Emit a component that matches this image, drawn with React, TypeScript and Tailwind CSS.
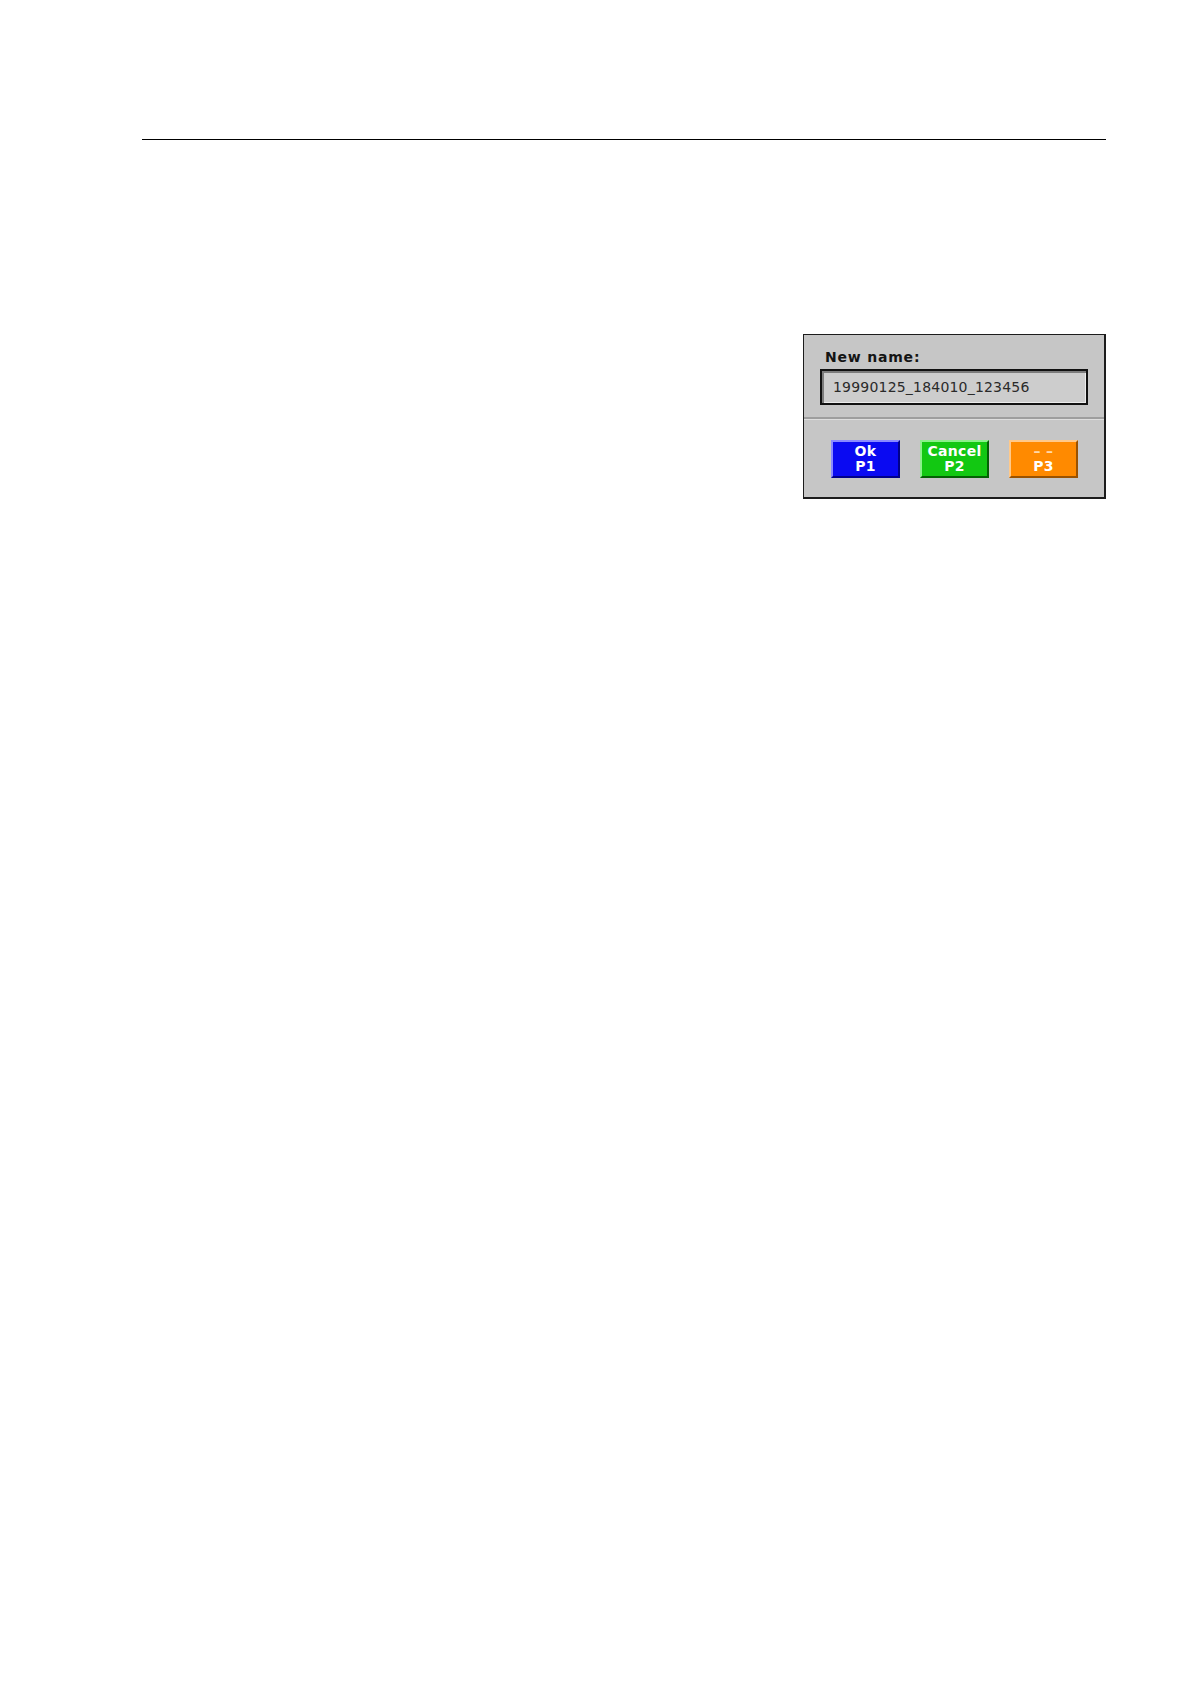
const buttons = [
  {
    top: 'Ok',
    bottom: 'P1',
    cls: 'bg-[#0a0af2] border-t-[#8a8aff] border-l-[#8a8aff] border-r-[#00008a] border-b-[#00008a] text-white',
    dim: false,
  },
  {
    top: 'Cancel',
    bottom: 'P2',
    cls: 'bg-[#12c812] border-t-[#8cf08c] border-l-[#8cf08c] border-r-[#046004] border-b-[#046004] text-white',
    dim: false,
  },
  {
    top: '– –',
    bottom: 'P3',
    cls: 'bg-[#ff8a00] border-t-[#ffc98a] border-l-[#ffc98a] border-r-[#9a5200] border-b-[#9a5200] text-white',
    dim: true,
  },
];

function RenameDialog() {
  return (
    <div className="w-[303px] bg-[#c6c6c6] border-l border-t border-r-2 border-b-2 border-[#1c1c1c] font-['DejaVu_Sans',sans-serif]">
      {/* name field */}
      <div className="px-[16px] pt-[14px] pb-[12px]">
        <div className="ml-[5px] text-[14px] leading-[17px] font-bold tracking-[0.8px] text-[#141414]">New name:</div>
        <div className="mt-[3px] h-[36px] border-2 border-[#111] bg-[#cdcdcd] shadow-[inset_2px_2px_0_#7c7c7c,inset_-1px_-1px_0_#ececec] flex items-center pl-[11px] text-[14px] tracking-[0.2px] text-[#2a2a2a]">
          19990125_184010_123456
        </div>
      </div>

      <div className="border-t-2 border-[#9e9e9e] border-b border-b-[#dedede]" />

      {/* soft keys */}
      <div className="flex gap-[20px] pl-[27px] pt-[20px] pb-[19px]">
        {buttons.map((b) => (
          <div
            key={b.bottom}
            className={`w-[69px] h-[38px] border-2 flex flex-col items-center justify-center text-[14px] leading-[15px] font-bold tracking-[0.3px] ${b.cls}`}
          >
            <span className={b.dim ? 'text-[#ffd8a8]' : ''}>{b.top}</span>
            <span>{b.bottom}</span>
          </div>
        ))}
      </div>
    </div>
  );
}

export default function App() {
  return (
    <div className="min-h-screen bg-white">
      <div className="pl-[142px] pr-[84px] pt-[139px]">
        <div className="h-px bg-black" />
        <div className="mt-[194px] flex justify-end">
          <RenameDialog />
        </div>
      </div>
    </div>
  );
}
